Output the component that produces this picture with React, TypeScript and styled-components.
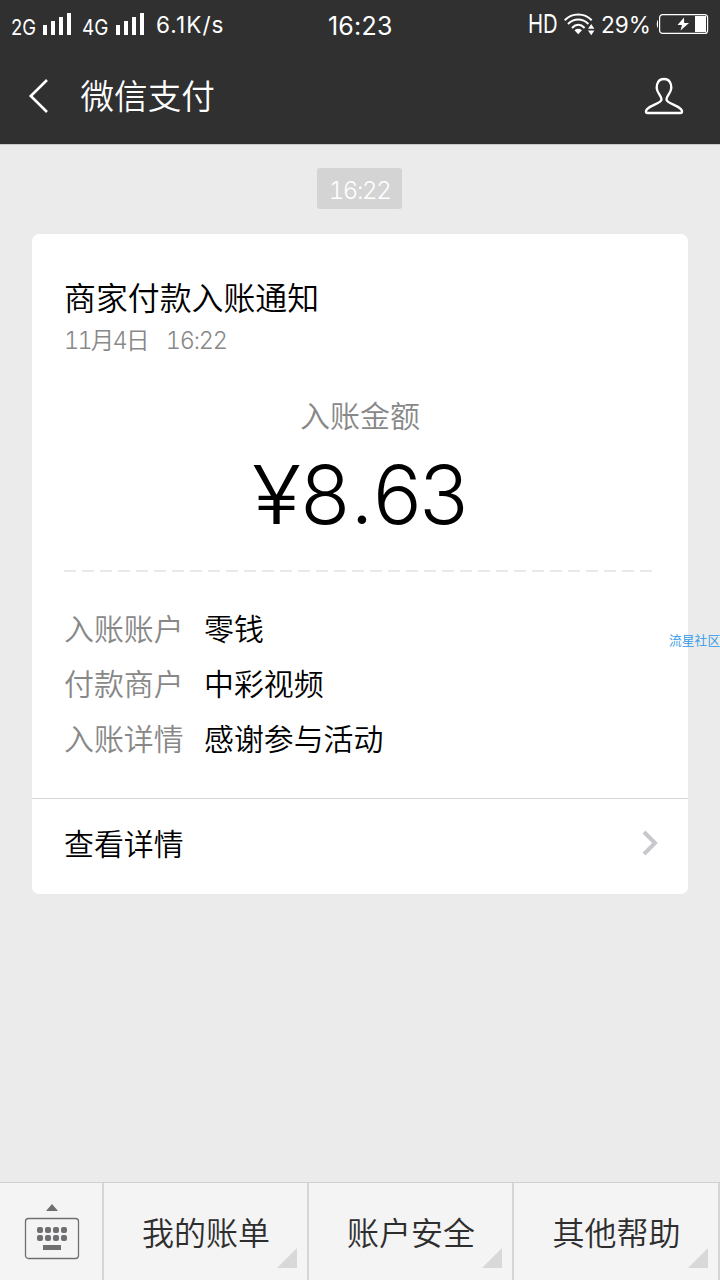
import React from 'react';
import styled, { createGlobalStyle } from 'styled-components';

const GlobalStyle = createGlobalStyle`
  * { box-sizing: border-box; }
  body {
    margin: 0;
    background: #ebebeb;
    font-family: Inter, 'Noto Sans CJK SC', sans-serif;
  }
`;

const Screen = styled.div`
  width: 720px;
  height: 1280px;
  display: flex;
  flex-direction: column;
  background: #ebebeb;
  position: relative;
  overflow: hidden;
`;

const StatusBar = styled.div`
  height: 50px;
  display: grid;
  grid-template-columns: 300px 120px 300px;
  background: #303030;
  color: #fff;
`;

const StatusGroup = styled.div<{ $align?: string }>`
  display: flex;
  align-items: flex-start;
  justify-content: ${p => p.$align ?? 'flex-start'};
`;

const StatusText = styled.span<{ $w: number; $size: number; $top: number; $ml?: number; $scale?: number; $ls?: number; $weight?: number }>`
  display: block;
  width: ${p => p.$w}px;
  margin-left: ${p => p.$ml ?? 0}px;
  margin-top: ${p => p.$top}px;
  font-size: ${p => p.$size}px;
  line-height: 30px;
  font-weight: ${p => p.$weight ?? 400};
  letter-spacing: ${p => p.$ls ?? 0}px;
  white-space: nowrap;
  transform: scaleX(${p => p.$scale ?? 1});
  transform-origin: 0 50%;
`;

const StatusIcon = styled.svg<{ $ml: number; $top: number }>`
  display: block;
  flex: none;
  margin-left: ${p => p.$ml}px;
  margin-top: ${p => p.$top}px;
`;

const NavBar = styled.header`
  height: 95px;
  display: flex;
  align-items: center;
  padding: 0 36px 2px 28px;
  background: #303030;
  color: #fff;
  border-bottom: 1px solid #c9c9c9;
`;

const NavTitle = styled.h1`
  flex: 1;
  margin: 2px 0 0 30.5px;
  font-size: 33.6px;
  line-height: 50px;
  font-weight: 350;
`;

const Feed = styled.main`
  flex: 1;
  display: flex;
  flex-direction: column;
  align-items: center;
  padding: 23px 32px 0;
`;

const TimeChip = styled.div`
  width: 85px;
  height: 41px;
  margin-right: 1px;
  border-radius: 3px;
  background: #d4d4d4;
  color: #fff;
  font-size: 24px;
  line-height: 45px;
  font-weight: 350;
  text-align: center;
  font-variant-numeric: tabular-nums;
  letter-spacing: -1.4px;
`;

const Card = styled.section`
  width: 656px;
  height: 660px;
  margin-top: 25px;
  background: #fff;
  border-radius: 7px;
`;

const CardBody = styled.div`
  height: 565px;
  padding: 45px 32px 0;
  border-bottom: 1px solid #d5d5d5;
`;

const CardTitle = styled.h2`
  margin: 0;
  font-size: 31.9px;
  line-height: 40px;
  font-weight: 350;
  color: #000;
`;

const CardDate = styled.div`
  display: flex;
  gap: 18px;
  margin-top: 5px;
  font-size: 23.5px;
  line-height: 34px;
  font-weight: 350;
  color: #888;
  font-variant-numeric: tabular-nums;
  letter-spacing: -1.2px;
`;

const Day = styled.span`
  letter-spacing: -1.8px;
`;

const AmountLabel = styled.div`
  margin-top: 38px;
  font-size: 30px;
  line-height: 40px;
  font-weight: 350;
  color: #888;
  text-align: center;
`;

const Amount = styled.div`
  display: flex;
  justify-content: center;
  height: 100px;
  margin-top: 9px;
  padding-left: 3px;
  font-size: 81px;
  line-height: 100px;
  font-weight: 300;
  letter-spacing: -2.5px;
  color: #000;
`;

const Currency = styled.span`
  transform: scaleX(1.12);
  transform-origin: 100% 50%;
  margin-right: 2px;
`;

const Point = styled.span`
  margin: 0 2px 0 3px;
`;

const Dashes = styled.div`
  width: 588px;
  height: 2px;
  margin-top: 25px;
  background: repeating-linear-gradient(90deg, #e9e9e9 0 12px, transparent 12px 18px);
`;

const Details = styled.dl`
  margin: 30px 0 0;
`;

const DetailRow = styled.div`
  display: grid;
  grid-template-columns: 140px 1fr;
  height: 55px;
  font-size: 29.9px;
  line-height: 55px;
  font-weight: 350;
`;

const DetailLabel = styled.dt`
  color: #888;
`;

const DetailValue = styled.dd`
  margin: 0;
  color: #000;
`;

const CardLink = styled.div`
  height: 95px;
  display: flex;
  align-items: center;
  justify-content: space-between;
  padding: 0 29px 7px 32px;
  font-size: 29.9px;
  line-height: 40px;
  font-weight: 350;
  color: #000;

  span { padding-top: 1px; }
`;

const Watermark = styled.div`
  position: absolute;
  left: 669px;
  top: 631px;
  font-size: 12.8px;
  line-height: 20px;
  font-weight: 350;
  color: #2f97ea;
  white-space: nowrap;
`;

const Tabs = styled.nav`
  height: 98px;
  display: grid;
  grid-template-columns: 104px 205px 205px 206px;
  border-top: 1px solid #d0d0d0;
  background: #f4f4f4;
`;

const KeyboardTab = styled.div`
  padding: 20px 0 0 24px;
  border-right: 2px solid #d5d5d5;
`;

const Tab = styled.div`
  position: relative;
  padding: 31px 0 0 1px;
  border-right: 2px solid #d5d5d5;
  font-size: 32px;
  line-height: 40px;
  font-weight: 350;
  color: #2e2e2e;
  text-align: center;

  &::after {
    content: '';
    position: absolute;
    right: 10px;
    bottom: 12px;
    border-style: solid;
    border-width: 0 0 20px 20px;
    border-color: transparent transparent #d8d8d8 transparent;
  }
`;

function Signal({ ml }: { ml: number }) {
  return (
    <StatusIcon $ml={ml} $top={13} width="29" height="22" fill="#fff">
      <rect x="0" y="12" width="4" height="10" />
      <rect x="8" y="8" width="4" height="14" />
      <rect x="16" y="4" width="4" height="18" />
      <rect x="24" y="0" width="4" height="22" />
    </StatusIcon>
  );
}

function Wifi() {
  return (
    <StatusIcon $ml={6} $top={13} width="32" height="23" fill="none" stroke="#fff" strokeWidth="2">
      <path d="M.7 7.200C8-.5 20.400-.5 27.700 7.200" />
      <path d="M4 11C10 5 18.400 5 24.400 11" />
      <path d="M8 15C12 10.800 16.600 10.800 20.600 15" />
      <path d="M10.500 17.200C12.800 15.300 15.700 15.300 18 17.200L14.200 21.300Z" fill="#fff" stroke="none" />
      <path d="M24 15.800L27.200 11L30.400 15.800ZM24 17.400L27.200 22.200L30.400 17.400Z" fill="#fff" stroke="none" />
    </StatusIcon>
  );
}

function Battery() {
  return (
    <StatusIcon $ml={6} $top={14} width="53" height="20">
      <path d="M2 6C.400 7 .400 13 2 14Z" fill="#fff" />
      <rect x="3.600" y=".6" width="48" height="18.800" rx="3" fill="none" stroke="#fff" strokeWidth="1.200" />
      <rect x="39" y="2" width="11" height="16" fill="#fff" />
      <path d="M28 3.500L21.500 11H26L24.500 16.500L33 9H28.200Z" fill="#fff" />
    </StatusIcon>
  );
}

const rows = [
  ['入账账户', '零钱'],
  ['付款商户', '中彩视频'],
  ['入账详情', '感谢参与活动'],
];

const tabs = ['我的账单', '账户安全', '其他帮助'];

export default function App() {
  return (
    <Screen>
      <GlobalStyle />
      <StatusBar>
        <StatusGroup>
          <StatusText $ml={11} $w={32} $size={22} $top={12} $scale={0.84}>2G</StatusText>
          <Signal ml={0} />
          <StatusText $ml={10} $w={34} $size={22} $top={12} $scale={0.86}>4G</StatusText>
          <Signal ml={0} />
          <StatusText $ml={11} $w={72} $size={22.5} $top={10} $ls={1.1}>6.1K/s</StatusText>
        </StatusGroup>
        <StatusGroup $align="center">
          <StatusText $w={64} $size={25} $top={11} $ls={0.2}>16:23</StatusText>
        </StatusGroup>
        <StatusGroup>
          <StatusText $ml={108} $w={30} $size={26} $top={9} $scale={0.78} $weight={400}>HD</StatusText>
          <Wifi />
          <StatusText $ml={5} $w={49} $size={22.6} $top={10}>29%</StatusText>
          <Battery />
        </StatusGroup>
      </StatusBar>
      <NavBar>
        <svg width="22" height="36" fill="none" stroke="#fff" strokeWidth="2.600">
          <path d="M19 2L2.800 18L19 34" />
        </svg>
        <NavTitle>微信支付</NavTitle>
        <svg width="40" height="38" fill="none" stroke="#fff" strokeWidth="2.400" strokeLinejoin="round">
          <path d="M20 2C14.500 2 12.500 6.500 12.700 11C12.900 16 17.500 18.500 17.500 22.500C17.500 27 2 28.500 2 34.500Q2 36 3.500 36H36.500Q38 36 38 34.500C38 28.500 22.500 27 22.500 22.500C22.500 18.500 27.100 16 27.300 11C27.500 6.500 25.500 2 20 2Z" />
        </svg>
      </NavBar>
      <Feed>
        <TimeChip>16:22</TimeChip>
        <Card>
          <CardBody>
            <CardTitle>商家付款入账通知</CardTitle>
            <CardDate><Day>11月4日</Day><span>16:22</span></CardDate>
            <AmountLabel>入账金额</AmountLabel>
            <Amount><Currency>¥</Currency>8<Point>.</Point>63</Amount>
            <Dashes />
            <Details>
              {rows.map(([label, value]) => (
                <DetailRow key={label}>
                  <DetailLabel>{label}</DetailLabel>
                  <DetailValue>{value}</DetailValue>
                </DetailRow>
              ))}
            </Details>
          </CardBody>
          <CardLink>
            <span>查看详情</span>
            <svg width="17" height="26" fill="none" stroke="#c7c7cc" strokeWidth="4">
              <path d="M2 2L13 13L2 24" />
            </svg>
          </CardLink>
        </Card>
      </Feed>
      <Tabs>
        <KeyboardTab>
          <svg width="56" height="58" fill="#6d6f71">
            <path d="M22 8L28 1L34 8Z" />
            <rect x="1.500" y="15.500" width="53" height="40" rx="3" fill="none" stroke="#6d6f71" strokeWidth="1.300" />
            {[24, 32].map(y =>
              [13, 21, 29, 37].map(x => <rect key={`${x}-${y}`} x={x} y={y} width="6" height="6" rx="2" />)
            )}
            <rect x="19" y="42" width="18" height="5" />
          </svg>
        </KeyboardTab>
        {tabs.map(label => (
          <Tab key={label}>{label}</Tab>
        ))}
      </Tabs>
      <Watermark>流星社区</Watermark>
    </Screen>
  );
}
